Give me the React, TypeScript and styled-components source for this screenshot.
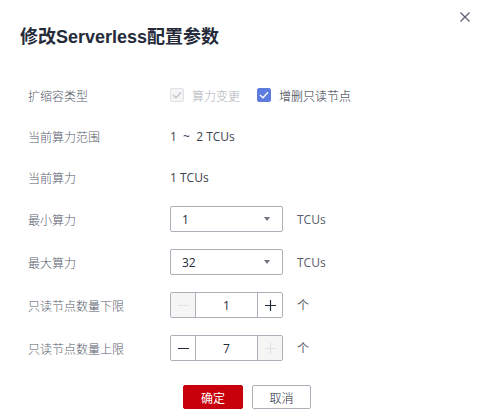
import React, { useState } from "react";
import styled, { createGlobalStyle } from "styled-components";

const GlobalStyle = createGlobalStyle`
  html, body {
    margin: 0;
    padding: 0;
    background: #ffffff;
  }
  body {
    font-family: "Open Sans", "Noto Sans CJK SC", sans-serif;
    color: #252b3a;
  }
`;

const Dialog = styled.div`
  position: relative;
  width: 484px;
  height: 420px;
  box-sizing: border-box;
  background: #ffffff;
`;

const CloseButton = styled.button`
  position: absolute;
  top: 11px;
  right: 14px;
  width: 11px;
  height: 11px;
  padding: 0;
  border: none;
  background: transparent;
  display: flex;
  align-items: center;
  justify-content: center;
  cursor: pointer;
`;

const Title = styled.h2`
  margin: 0;
  padding: 27px 0 0 20px;
  font-family: "Liberation Sans", "Noto Sans CJK SC", sans-serif;
  font-size: 18px;
  line-height: 20px;
  font-weight: bold;
  color: #252b3a;
`;

const Form = styled.div`
  margin-top: 36px;
  padding-left: 28px;
  display: flex;
  flex-direction: column;
  gap: 17px;
`;

const Row = styled.div<{ $tall?: boolean }>`
  display: grid;
  grid-template-columns: 142px auto;
  align-items: center;
  height: ${(p) => (p.$tall ? "26px" : "24px")};
`;

const Label = styled.div`
  font-size: 12px;
  font-weight: 300;
  color: #575d6c;
  font-family: "Noto Sans CJK SC", sans-serif;
`;

const Value = styled.div`
  font-size: 12px;
  color: #3d4250;
  display: flex;
  align-items: center;
`;

const Field = styled.div`
  display: flex;
  align-items: center;
`;

const CheckItem = styled.label<{ $disabled?: boolean }>`
  display: flex;
  align-items: center;
  gap: 8px;
  margin-right: 17px;
  font-size: 12px;
  font-weight: 300;
  font-family: "Noto Sans CJK SC", sans-serif;
  color: ${(p) => (p.$disabled ? "#adb0b8" : "#252b3a")};
  cursor: ${(p) => (p.$disabled ? "not-allowed" : "pointer")};
`;

const Box = styled.span<{ $checked?: boolean; $disabled?: boolean }>`
  width: 14px;
  height: 14px;
  box-sizing: border-box;
  border-radius: 2px;
  display: flex;
  align-items: center;
  justify-content: center;
  background: ${(p) =>
    p.$disabled ? "#f5f5f6" : p.$checked ? "#5e7ce0" : "#ffffff"};
  border: 1px solid
    ${(p) => (p.$disabled ? "#dfe1e6" : p.$checked ? "#5e7ce0" : "#adb0b8")};
`;

const Select = styled.div`
  width: 113px;
  height: 26px;
  box-sizing: border-box;
  border: 1px solid #adb0b8;
  border-radius: 2px;
  padding: 0 10px 0 11px;
  display: flex;
  align-items: center;
  justify-content: space-between;
  font-size: 12px;
  color: #252b3a;
`;

const Caret = styled.span`
  width: 0;
  height: 0;
  border-left: 3.5px solid transparent;
  border-right: 3.5px solid transparent;
  border-top: 4px solid #71757f;
  margin-right: 2px;
`;

const Unit = styled.span`
  margin-left: 14px;
  font-size: 12px;
  color: #575d6c;
  font-family: "Open Sans", "Noto Sans CJK SC", sans-serif;
`;

const Stepper = styled.div`
  width: 113px;
  height: 26px;
  box-sizing: border-box;
  border: 1px solid #adb0b8;
  border-radius: 2px;
  display: grid;
  grid-template-columns: 25px 1fr 25px;
  overflow: hidden;
`;

const StepButton = styled.button<{ $disabled?: boolean; $side: "left" | "right" }>`
  border: none;
  padding: 0;
  margin: 0;
  background: ${(p) => (p.$disabled ? "#f5f5f6" : "#ffffff")};
  ${(p) =>
    p.$side === "left"
      ? "border-right: 1px solid #adb0b8;"
      : "border-left: 1px solid #adb0b8;"}
  display: flex;
  align-items: center;
  justify-content: center;
  cursor: ${(p) => (p.$disabled ? "not-allowed" : "pointer")};
`;

const StepValue = styled.div`
  display: flex;
  align-items: center;
  justify-content: center;
  font-size: 12px;
  color: #252b3a;
`;

const Footer = styled.div`
  margin-top: 24px;
  display: flex;
  justify-content: center;
  gap: 9px;
  padding-left: 10px;
`;

const Button = styled.button<{ $primary?: boolean }>`
  width: ${(p) => (p.$primary ? "60px" : "59px")};
  height: 24px;
  box-sizing: border-box;
  border-radius: 2px;
  font-size: 12px;
  font-weight: ${(p) => (p.$primary ? 400 : 300)};
  font-family: "Noto Sans CJK SC", sans-serif;
  cursor: pointer;
  background: ${(p) => (p.$primary ? "#c7000b" : "#ffffff")};
  color: ${(p) => (p.$primary ? "#ffffff" : "#252b3a")};
  border: 1px solid ${(p) => (p.$primary ? "#c7000b" : "#adb0b8")};
`;

const CheckMark = ({ color }: { color: string }) => (
  <svg width="10" height="8" viewBox="0 0 10 8">
    <path d="M1 4 L4 6.8 L9 1.2" fill="none" stroke={color} strokeWidth="1.3" />
  </svg>
);

const MinusIcon = ({ color }: { color: string }) => (
  <svg width="11" height="11" viewBox="0 0 11 11">
    <path d="M0 5.5 H11" stroke={color} strokeWidth="1.2" />
  </svg>
);

const PlusIcon = ({ color }: { color: string }) => (
  <svg width="11" height="11" viewBox="0 0 11 11">
    <path d="M0 5.5 H11 M5.5 0 V11" stroke={color} strokeWidth="1.2" />
  </svg>
);

const NumberStepper = ({
  value,
  min,
  max,
  onChange,
}: {
  value: number;
  min: number;
  max: number;
  onChange: (v: number) => void;
}) => {
  const minusOff = value <= min;
  const plusOff = value >= max;
  return (
    <Stepper>
      <StepButton
        $side="left"
        $disabled={minusOff}
        onClick={() => !minusOff && onChange(value - 1)}
      >
        <MinusIcon color={minusOff ? "#dfe1e6" : "#252b3a"} />
      </StepButton>
      <StepValue>{value}</StepValue>
      <StepButton
        $side="right"
        $disabled={plusOff}
        onClick={() => !plusOff && onChange(value + 1)}
      >
        <PlusIcon color={plusOff ? "#dfe1e6" : "#252b3a"} />
      </StepButton>
    </Stepper>
  );
};

const App = () => {
  const [readOnly, setReadOnly] = useState(true);
  const [lower, setLower] = useState(1);
  const [upper, setUpper] = useState(7);

  return (
    <Dialog>
      <GlobalStyle />
      <CloseButton aria-label="close">
        <svg width="10" height="10" viewBox="0 0 10 10">
          <path d="M0.5 0.5 L9.5 9.5 M9.5 0.5 L0.5 9.5" stroke="#575d6c" strokeWidth="1.2" />
        </svg>
      </CloseButton>
      <Title>修改Serverless配置参数</Title>
      <Form>
        <Row>
          <Label>扩缩容类型</Label>
          <Field>
            <CheckItem $disabled>
              <Box $checked $disabled>
                <CheckMark color="#c2c4c9" />
              </Box>
              算力变更
            </CheckItem>
            <CheckItem onClick={() => setReadOnly(!readOnly)}>
              <Box $checked={readOnly}>
                {readOnly && <CheckMark color="#ffffff" />}
              </Box>
              增删只读节点
            </CheckItem>
          </Field>
        </Row>
        <Row>
          <Label>当前算力范围</Label>
          <Value>1&nbsp;&nbsp;~&nbsp;&nbsp;2 TCUs</Value>
        </Row>
        <Row>
          <Label>当前算力</Label>
          <Value>1 TCUs</Value>
        </Row>
        <Row $tall>
          <Label>最小算力</Label>
          <Field>
            <Select>
              1
              <Caret />
            </Select>
            <Unit>TCUs</Unit>
          </Field>
        </Row>
        <Row $tall>
          <Label>最大算力</Label>
          <Field>
            <Select>
              32
              <Caret />
            </Select>
            <Unit>TCUs</Unit>
          </Field>
        </Row>
        <Row $tall>
          <Label>只读节点数量下限</Label>
          <Field>
            <NumberStepper value={lower} min={1} max={upper} onChange={setLower} />
            <Unit>个</Unit>
          </Field>
        </Row>
        <Row $tall>
          <Label>只读节点数量上限</Label>
          <Field>
            <NumberStepper value={upper} min={lower} max={7} onChange={setUpper} />
            <Unit>个</Unit>
          </Field>
        </Row>
      </Form>
      <Footer>
        <Button $primary>确定</Button>
        <Button>取消</Button>
      </Footer>
    </Dialog>
  );
};

export default App;
